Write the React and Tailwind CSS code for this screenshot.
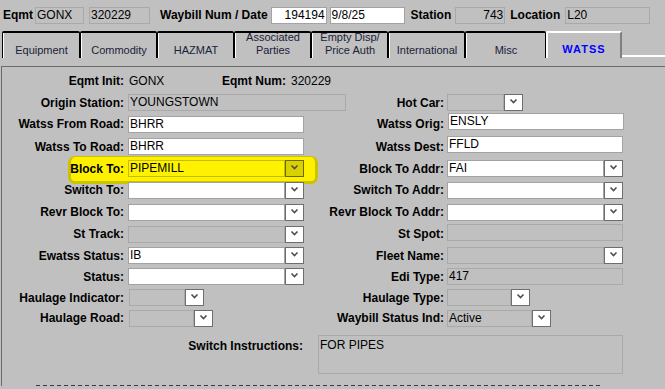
import clsx from 'clsx'

function Chevron() {
  return (
    <svg width="9" height="6" viewBox="0 0 9 6" className="mt-[3px]">
      <polyline points="1.5,1.5 4.5,4.5 7.5,1.5" fill="none" stroke="#4d4d4d" strokeWidth="1.6" />
    </svg>
  )
}

function Box({ w, gray, right, children }) {
  return (
    <div
      className={clsx(
        'h-[17px] flex-none overflow-hidden whitespace-nowrap border px-[1px] text-[12px] leading-[15px]',
        gray ? 'border-[#a9a9a9] bg-[#c0c0c0]' : 'border-[#a3a3a3] bg-white',
        right && 'text-right',
        w
      )}
    >
      {children}
    </div>
  )
}

function Select({ w, gray, hi, children }) {
  return (
    <div className={clsx('flex h-[17px] flex-none', w)}>
      <div
        className={clsx(
          'flex-1 overflow-hidden whitespace-nowrap border px-[1px] text-[12px] leading-[15px]',
          hi ? 'border-[#c4bd00] bg-[#fff200]' : gray ? 'border-[#a9a9a9] bg-[#c0c0c0]' : 'border-[#a3a3a3] bg-white'
        )}
      >
        {children}
      </div>
      <div
        className={clsx(
          'flex w-[19px] flex-none justify-center border',
          hi ? 'border-[#6b6800] bg-[#d9d000]' : 'border-[#6e6e6e] bg-white'
        )}
      >
        <Chevron />
      </div>
    </div>
  )
}

function Row({ h, label, left, rlabel, right, hi }) {
  return (
    <div className={clsx('relative flex items-center whitespace-nowrap', h)}>
      {hi && (
        <div className="absolute left-[66px] top-[-2px] h-[28px] w-[250px] rounded-[7px] border-[3px] border-t-[1px] border-[#c9c300] bg-[#fff000]" />
      )}
      <div className="relative w-[122px] flex-none text-right font-bold">{label}</div>
      <div className="relative ml-[4px] flex w-[186px] flex-none items-center">{left}</div>
      <div className="relative w-[130px] flex-none text-right font-bold">{rlabel}</div>
      <div className="relative ml-[3px] flex items-center">{right}</div>
    </div>
  )
}

function Tab({ children, w, active }) {
  if (active) {
    return (
      <div className={clsx('flex h-[27px] flex-none items-end justify-center rounded-tl-[2px] border-l-2 border-r-2 border-t-2 border-l-white border-r-[#808080] border-t-white pb-[1px] text-[11px] font-bold tracking-[1px] text-[#0000ff]', w)}>
        {children}
      </div>
    )
  }
  return (
    <div className={clsx('flex h-[27px] flex-none rounded-t-[2px] border border-t-2 border-b-0 border-black', w)}>
      <div className="flex flex-1 items-end justify-center border-l border-white pb-[1px] text-center text-[11px] leading-[13px] text-[#1a2238]">
        {children}
      </div>
    </div>
  )
}

export default function App() {
  return (
    <div className="h-[389px] w-[665px] overflow-hidden bg-[#c0c0c0] font-['Liberation_Sans',Arial,sans-serif] text-[12px] text-black">
      {/* header fields */}
      <div className="flex h-[30px] items-center whitespace-nowrap pl-[3px]">
        <span className="font-bold">Eqmt</span>
        <div className="ml-[2px]"><Box w="w-[49px]" gray>GONX</Box></div>
        <div className="ml-[5px]"><Box w="w-[61px]" gray>320229</Box></div>
        <span className="ml-[10px] font-bold">Waybill Num / Date</span>
        <div className="ml-[3px]"><Box w="w-[56px]" right>194194</Box></div>
        <div className="ml-[3px]"><Box w="w-[75px]">9/8/25</Box></div>
        <span className="ml-[6px] font-bold">Station</span>
        <div className="ml-[4px]"><Box w="w-[50px]" gray right>743</Box></div>
        <span className="ml-[5px] font-bold">Location</span>
        <div className="ml-[5px]"><Box w="w-[85px]" gray>L20</Box></div>
      </div>

      {/* tabs */}
      <div className="mt-[1px] flex items-end pl-[2px]">
        <Tab w="w-[78px]">Equipment</Tab>
        <Tab w="w-[77px]">Commodity</Tab>
        <Tab w="w-[77px]">HAZMAT</Tab>
        <Tab w="w-[77px]">Associated<br />Parties</Tab>
        <Tab w="w-[77px]">Empty Disp/<br />Price Auth</Tab>
        <Tab w="w-[77px]">International</Tab>
        <Tab w="w-[81px]">Misc</Tab>
        <Tab w="w-[76px]" active>WATSS</Tab>
        <div className="mb-[1px] h-[2px] flex-1 bg-white" />
      </div>

      {/* panel */}
      <div className="mt-[8px] pl-[1px]">
        <div className="border-l border-t border-[#6b6b6b] pt-[3px]">
          <Row
            h="h-[22px]"
            label="Eqmt Init:"
            left={
              <>
                <span className="ml-[1px] w-[93px] flex-none">GONX</span>
                <span className="flex-none font-bold">Eqmt Num:</span>
                <span className="ml-[5px] flex-none">320229</span>
              </>
            }
          />
          <Row
            h="h-[21px]"
            label="Origin Station:"
            left={<Box w="w-[218px]" gray>YOUNGSTOWN</Box>}
            rlabel="Hot Car:"
            right={<Select w="w-[76px]" gray />}
          />
          <Row
            h="h-[22px]"
            label="Watss From Road:"
            left={<Box w="w-[176px]">BHRR</Box>}
            rlabel="Watss Orig:"
            right={<div className="mb-[5px] ml-[1px]"><Box w="w-[176px]">ENSLY</Box></div>}
          />
          <Row
            h="h-[23px]"
            label="Watss To Road:"
            left={<Box w="w-[176px]">BHRR</Box>}
            rlabel="Watss Dest:"
            right={<div className="mb-[4px]"><Box w="w-[176px]">FFLD</Box></div>}
          />
          <Row
            h="h-[21px]"
            hi
            label="Block To:"
            left={<Select w="w-[176px]" hi>PIPEMILL</Select>}
            rlabel="Block To Addr:"
            right={<Select w="w-[176px]">FAI</Select>}
          />
          <Row
            h="h-[22px]"
            label="Switch To:"
            left={<Select w="w-[176px]" />}
            rlabel="Switch To Addr:"
            right={<Select w="w-[176px]" />}
          />
          <Row
            h="h-[22px]"
            label="Revr Block To:"
            left={<Select w="w-[176px]" />}
            rlabel="Revr Block To Addr:"
            right={<Select w="w-[176px]" />}
          />
          <Row
            h="h-[22px]"
            label="St Track:"
            left={<Select w="w-[176px]" gray />}
            rlabel="St Spot:"
            right={<div className="mb-[3px]"><Box w="w-[176px]" gray /></div>}
          />
          <Row
            h="h-[21px]"
            label="Ewatss Status:"
            left={<Select w="w-[176px]">IB</Select>}
            rlabel="Fleet Name:"
            right={<Select w="w-[176px]" gray />}
          />
          <Row
            h="h-[21px]"
            label="Status:"
            left={<Select w="w-[176px]" />}
            rlabel="Edi Type:"
            right={<Box w="w-[176px]" gray>417</Box>}
          />
          <Row
            h="h-[21px]"
            label="Haulage Indicator:"
            left={<div className="ml-[1px]"><Select w="w-[75px]" gray /></div>}
            rlabel="Haulage Type:"
            right={<Select w="w-[83px]" gray />}
          />
          <Row
            h="h-[20px]"
            label="Haulage Road:"
            left={<div className="ml-[1px]"><Select w="w-[84px]" gray /></div>}
            rlabel="Waybill Status Ind:"
            right={<Select w="w-[104px]" gray>Active</Select>}
          />

          <div className="mt-[7px] flex items-start">
            <div className="w-[301px] flex-none pt-[2px] text-right font-bold">Switch Instructions:</div>
            <div className="ml-[15px] h-[39px] w-[305px] flex-none border border-[#a9a9a9] px-[1px] pt-[2px] leading-[15px]">
              FOR PIPES
            </div>
          </div>

          <div className="ml-[34px] mt-[11px] h-[1px] w-[564px] bg-[repeating-linear-gradient(90deg,#3a3a3a_0_4px,transparent_4px_7px)]" />
        </div>
      </div>
    </div>
  )
}
